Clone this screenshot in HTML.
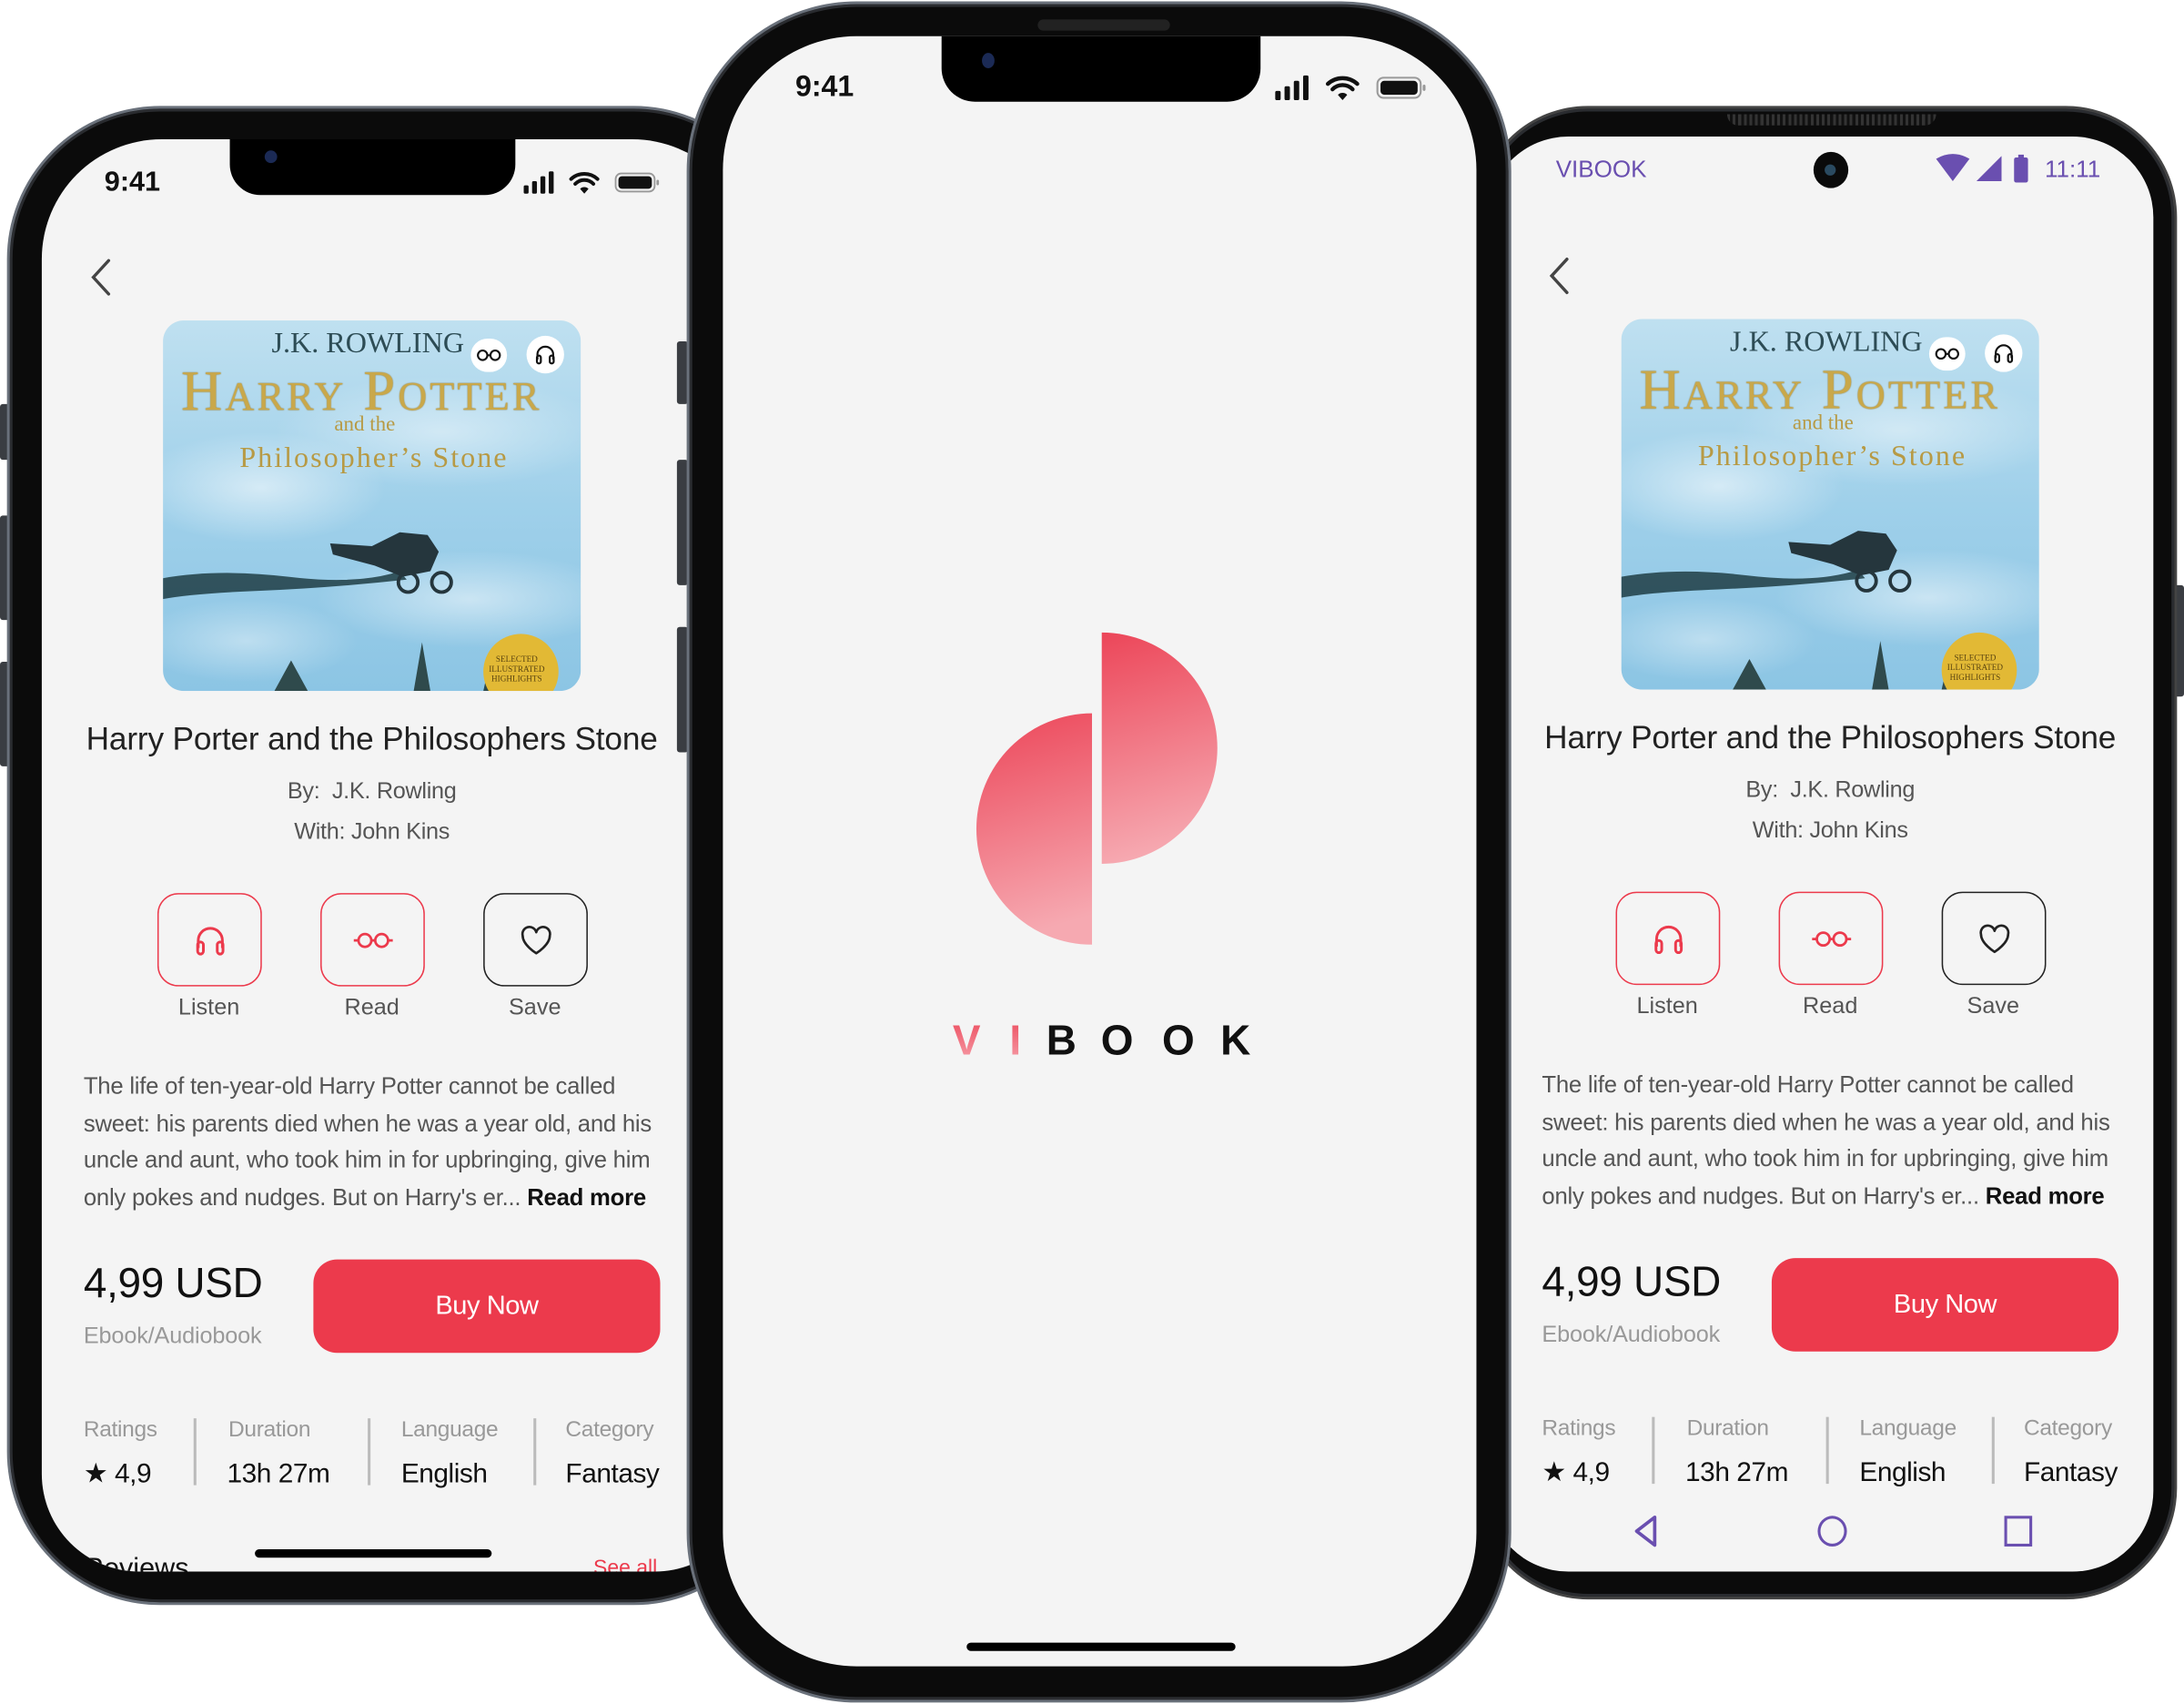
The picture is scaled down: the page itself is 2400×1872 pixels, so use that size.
<!DOCTYPE html>
<html><head><meta charset="utf-8">
<style>
*{margin:0;padding:0;box-sizing:border-box}
html,body{width:2400px;height:1872px;overflow:hidden;background:#fff}
#w{position:absolute;left:0;top:0;width:1568px;height:1223px;overflow:hidden;transform:scale(1.530612);transform-origin:0 0;font-family:"Liberation Sans",sans-serif}
.a{position:absolute}
.frame{position:absolute;background:#0b0b0b;border:2.5px solid #6a717b;box-shadow:inset 0 0 0 2px #2a2c30}
.screen{position:absolute;background:#f4f4f4;overflow:hidden}
.t{position:absolute;white-space:nowrap;line-height:1}
.btn{position:absolute;width:75px;height:67px;border:1.5px solid #ec3a4c;border-radius:15px}
.btn svg{position:absolute;left:50%;top:50%;transform:translate(-50%,-50%)}
.lbl{position:absolute;font-size:16.5px;color:#555;width:100px;text-align:center;line-height:1}
.desc{position:absolute;left:60px;font-size:16.8px;color:#555;letter-spacing:-0.15px;line-height:1;white-space:nowrap}
.sl{position:absolute;font-size:16px;color:#999;line-height:1;letter-spacing:-0.2px}
.sv{position:absolute;font-size:19.5px;color:#111;line-height:1;letter-spacing:-0.3px}
.dv{position:absolute;width:1.5px;height:48px;background:#bbb;top:1018px}
.side{position:absolute;background:#3a3d42;border-radius:2px}
</style></head><body><div id="w">

<!-- LEFT PHONE -->
<div class="side" style="left:0;top:290px;width:7px;height:40px"></div>
<div class="side" style="left:0;top:370px;width:7px;height:75px"></div>
<div class="side" style="left:0;top:475px;width:7px;height:75px"></div>
<div class="frame" style="left:5px;top:76px;width:560px;height:1076px;border-radius:110px"></div>
<div class="screen" style="left:30px;top:100px;width:510px;height:1028px;border-radius:86px 86px 70px 70px">
 <div class="a" style="left:-30px;top:-100px;width:600px;height:1228px" id="L">
  <div class="a" style="left:165px;top:98px;width:205px;height:42px;background:#000;border-radius:0 0 22px 22px"></div>
  <div class="a" style="left:190px;top:108px;width:9px;height:9px;border-radius:50%;background:#1b2a55"></div>
  <div class="t" style="left:75px;top:121px;font-size:20px;font-weight:bold;color:#111">9:41</div>
  <svg class="a" style="left:376px;top:122px" width="98" height="18" viewBox="0 0 98 18">
   <rect x="0" y="11" width="3.5" height="6" rx="1" fill="#111"/><rect x="6" y="8" width="3.5" height="9" rx="1" fill="#111"/><rect x="12" y="4.5" width="3.5" height="12.5" rx="1" fill="#111"/><rect x="18" y="1" width="3.5" height="16" rx="1" fill="#111"/>
   <path d="M34 6.5a14 14 0 0 1 19 0M37 10a9 9 0 0 1 13 0" stroke="#111" stroke-width="2.6" fill="none" stroke-linecap="round"/>
   <path d="M40.5 13.6l3 3.4 3-3.4a4 4 0 0 0-6 0z" fill="#111"/>
   <rect x="66" y="2.5" width="28" height="13" rx="4" fill="none" stroke="#999" stroke-width="1.2"/><rect x="68" y="4.5" width="24" height="9" rx="2.5" fill="#111"/><rect x="95.3" y="7" width="1.8" height="4" rx="1" fill="#999"/>
  </svg>
 </div>
</div>

<!-- RIGHT PHONE -->
<div class="side" style="left:1558px;top:420px;width:10px;height:80px"></div>
<div class="frame" style="left:1060px;top:76px;width:503px;height:1072px;border-radius:80px;border-color:#444"></div>
<div class="a" style="left:1240px;top:82px;width:150px;height:8px;background:repeating-linear-gradient(90deg,#333 0 2px,#111 2px 4px);border-radius:0 0 8px 8px"></div>
<div class="screen" style="left:1068px;top:98px;width:478px;height:1030px;border-radius:58px" id="Rs">
 <div class="a" style="left:-1068px;top:-98px;width:1600px;height:1228px">
  <div class="t" style="left:1117px;top:113px;font-size:17px;color:#6a4fb0">VIBOOK</div>
  <div class="a" style="left:1302px;top:109px;width:25px;height:26px;border-radius:50%;background:#0a0a0a"><div class="a" style="left:8px;top:9px;width:8px;height:8px;border-radius:50%;background:#2a4a60"></div></div>
  <svg class="a" style="left:1390px;top:110px" width="70" height="22" viewBox="0 0 70 22">
   <path d="M0 4Q12 -3 24 4L12 20z" fill="#6a4fb0"/>
   <path d="M29 20L47 2V20z" fill="#6a4fb0"/>
   <rect x="56" y="3" width="10" height="18" rx="1.5" fill="#6a4fb0"/><rect x="59" y="1" width="4" height="3" fill="#6a4fb0"/>
  </svg>
  <div class="t" style="left:1468px;top:113px;font-size:17px;color:#6a4fb0">11:11</div>
  <svg class="a" style="left:1170px;top:1086px" width="24" height="26" viewBox="0 0 24 26"><path d="M18 3L5 13l13 10z" fill="none" stroke="#6a4fb0" stroke-width="2.4" stroke-linejoin="round"/></svg>
  <div class="a" style="left:1305px;top:1088px;width:21px;height:22px;border:2.4px solid #6a4fb0;border-radius:50%"></div>
  <div class="a" style="left:1439px;top:1088px;width:20px;height:22px;border:2.4px solid #6a4fb0"></div>
 </div>
</div>

<!-- CENTER PHONE -->
<div class="side" style="left:486px;top:245px;width:8px;height:45px"></div>
<div class="side" style="left:486px;top:330px;width:8px;height:90px"></div>
<div class="side" style="left:486px;top:450px;width:8px;height:90px"></div>
<div class="frame" style="left:493px;top:1px;width:592px;height:1221px;border-radius:122px"></div>
<div class="a" style="left:745px;top:14px;width:95px;height:8px;border-radius:4px;background:#222"></div>
<div class="screen" style="left:519px;top:26px;width:541px;height:1170px;border-radius:96px">
 <div class="a" style="left:-519px;top:-26px;width:1600px;height:1222px">
  <div class="a" style="left:676px;top:24px;width:229px;height:49px;background:#000;border-radius:0 0 24px 24px"></div>
  <div class="a" style="left:705px;top:38px;width:9px;height:11px;border-radius:50%;background:#1b2a55"></div>
  <div class="t" style="left:571px;top:52px;font-size:21px;font-weight:bold;color:#111">9:41</div>
  <svg class="a" style="left:913px;top:53px" width="114" height="20" viewBox="0 0 98 18">
   <rect x="0" y="11" width="3.5" height="6" rx="1" fill="#111"/><rect x="6" y="8" width="3.5" height="9" rx="1" fill="#111"/><rect x="12" y="4.5" width="3.5" height="12.5" rx="1" fill="#111"/><rect x="18" y="1" width="3.5" height="16" rx="1" fill="#111"/>
   <path d="M34 6.5a14 14 0 0 1 19 0M37 10a9 9 0 0 1 13 0" stroke="#111" stroke-width="2.6" fill="none" stroke-linecap="round"/>
   <path d="M40.5 13.6l3 3.4 3-3.4a4 4 0 0 0-6 0z" fill="#111"/>
   <rect x="66" y="2.5" width="28" height="13" rx="4" fill="none" stroke="#999" stroke-width="1.2"/><rect x="68" y="4.5" width="24" height="9" rx="2.5" fill="#111"/><rect x="95.3" y="7" width="1.8" height="4" rx="1" fill="#999"/>
  </svg>
  <svg class="a" style="left:690px;top:440px" width="200" height="250" viewBox="690 440 200 250">
   <defs><linearGradient id="g1" x1="0" y1="0" x2="0.15" y2="1"><stop offset="0" stop-color="#ec4659"/><stop offset="1" stop-color="#f6a9b1"/></linearGradient></defs>
   <path d="M784 512A83 83 0 0 0 784 678Z" fill="url(#g1)"/>
   <path d="M791 454A83 83 0 0 1 791 620Z" fill="url(#g1)"/>
  </svg>
  <svg class="a" style="left:670px;top:720px" width="250" height="50" viewBox="670 720 250 50">
   <defs><linearGradient id="g2" x1="0" y1="0" x2="0" y2="1"><stop offset="0" stop-color="#ec4a5c"/><stop offset="1" stop-color="#f6a0aa"/></linearGradient></defs>
   <g font-family="Liberation Sans" font-weight="bold" font-size="30" text-anchor="middle">
   <text x="694" y="757" fill="url(#g2)">V</text>
   <text x="729" y="757" fill="url(#g2)">I</text>
   <text x="762" y="757" fill="#111">B</text>
   <text x="802" y="757" fill="#111">O</text>
   <text x="846" y="757" fill="#111">O</text>
   <text x="887" y="757" fill="#111">K</text></g>
  </svg>
  <div class="a" style="left:694px;top:1179px;width:193px;height:6px;border-radius:3px;background:#000"></div>
 </div>
</div>

<template id="tpl">
  <svg class="a" style="left:62px;top:185px" width="20" height="28" viewBox="0 0 20 28"><path d="M16 2L5 14l11 12" fill="none" stroke="#444" stroke-width="2.2" stroke-linecap="round"/></svg>
  <div class="a" style="left:117px;top:230px;width:300px;height:266px;border-radius:15px;overflow:hidden;background:radial-gradient(ellipse 90px 40px at 70px 120px,rgba(255,255,255,.55),transparent),radial-gradient(ellipse 110px 35px at 220px 200px,rgba(255,255,255,.5),transparent),radial-gradient(ellipse 120px 40px at 200px 80px,rgba(255,255,255,.45),transparent),radial-gradient(ellipse 80px 30px at 60px 230px,rgba(255,255,255,.4),transparent),linear-gradient(180deg,#bfe0f0 0%,#9fd0ea 50%,#8cc5e4 100%)">
   <div class="t" style="left:78px;top:6px;font-family:'Liberation Serif',serif;font-size:21px;color:#2d4c55">J.K. ROWLING</div>
   <div class="t" style="left:13px;top:30px;font-family:'Liberation Serif',serif;font-size:41px;color:#c9a84a;letter-spacing:2px;font-variant:small-caps;text-shadow:0 0 1px #8a6d20">Harry Potter</div>
   <div class="t" style="left:123px;top:68px;font-family:'Liberation Serif',serif;font-size:15px;color:#b79a45">and the</div>
   <div class="t" style="left:55px;top:88px;font-family:'Liberation Serif',serif;font-size:21px;color:#b79a45;letter-spacing:1.3px">Philosopher’s Stone</div>
   <div class="a" style="left:221px;top:13px;width:26px;height:24px;border-radius:12px;background:#fff"><svg class="a" style="left:4px;top:7px" width="18" height="10" viewBox="0 0 18 10"><circle cx="4.5" cy="5" r="3.4" fill="none" stroke="#111" stroke-width="1.4"/><circle cx="13.5" cy="5" r="3.4" fill="none" stroke="#111" stroke-width="1.4"/><path d="M8 5h2" stroke="#111" stroke-width="1.4"/></svg></div>
   <div class="a" style="left:261px;top:11px;width:27px;height:27px;border-radius:50%;background:#fff"><svg class="a" style="left:5px;top:5px" width="17" height="17" viewBox="0 0 24 24"><path d="M4 17v-5a8 8 0 0 1 16 0v5" fill="none" stroke="#111" stroke-width="2"/><rect x="3.5" y="13" width="4" height="8" rx="2" fill="none" stroke="#111" stroke-width="2"/><rect x="16.5" y="13" width="4" height="8" rx="2" fill="none" stroke="#111" stroke-width="2"/></svg></div>
   <svg class="a" style="left:0;top:140px" width="300" height="126" viewBox="0 0 300 126">
    <path d="M0 45Q40 38 90 44T170 40L175 46Q120 52 70 54T0 60z" fill="#1f3d44" opacity=".85"/>
    <path d="M120 20l30 2 20-10 20 2 8 12-6 14-20 4-20-8-30-8z" fill="#25363d"/>
    <circle cx="176" cy="48" r="7" fill="none" stroke="#25363d" stroke-width="2.5"/><circle cx="200" cy="48" r="7" fill="none" stroke="#25363d" stroke-width="2.5"/>
    <path d="M80 126l12-22 12 22zM180 126l6-35 6 35zM230 126l4-18 4 18z" fill="#2f4a4c"/>
    <circle cx="257" cy="112" r="27" fill="#e2b935"/>
   </svg>
   <div class="t" style="left:234px;top:241px;font-family:'Liberation Serif',serif;font-size:6px;color:#5a4410;text-align:center;line-height:1.2">SELECTED<br>ILLUSTRATED<br>HIGHLIGHTS</div>
  </div>
  <div class="t" style="left:0;width:534px;text-align:center;top:519px;font-size:23px;color:#222;letter-spacing:-0.1px">Harry Porter and the Philosophers Stone</div>
  <div class="t" style="left:0;width:534px;text-align:center;top:560px;font-size:16.5px;color:#555;letter-spacing:-0.2px">By:&nbsp; J.K. Rowling</div>
  <div class="t" style="left:0;width:534px;text-align:center;top:589px;font-size:16.5px;color:#555;letter-spacing:-0.2px">With: John Kins</div>
  <div class="btn" style="left:113px;top:641px"><svg width="26" height="26" viewBox="0 0 24 24"><path d="M4 17v-5a8 8 0 0 1 16 0v5" fill="none" stroke="#ec3a4c" stroke-width="1.8"/><rect x="3.6" y="13" width="3.8" height="8" rx="1.9" fill="none" stroke="#ec3a4c" stroke-width="1.8"/><rect x="16.6" y="13" width="3.8" height="8" rx="1.9" fill="none" stroke="#ec3a4c" stroke-width="1.8"/></svg></div>
  <div class="btn" style="left:230px;top:641px"><svg width="30" height="14" viewBox="0 0 30 14"><circle cx="9" cy="7" r="4.6" fill="none" stroke="#ec3a4c" stroke-width="1.8"/><circle cx="21" cy="7" r="4.6" fill="none" stroke="#ec3a4c" stroke-width="1.8"/><path d="M13.6 7h2.8M1 7h3.4M25.6 7H29" stroke="#ec3a4c" stroke-width="1.8"/></svg></div>
  <div class="btn" style="left:347px;top:641px;border-color:#222"><svg width="28" height="26" viewBox="0 0 24 24"><path d="M12 20.5S3 15 3 8.8A4.6 4.6 0 0 1 12 6.6a4.6 4.6 0 0 1 9 2.2C21 15 12 20.5 12 20.5z" fill="none" stroke="#222" stroke-width="1.6" stroke-linejoin="round"/></svg></div>
  <div class="lbl" style="left:100px;top:715px">Listen</div>
  <div class="lbl" style="left:217px;top:715px">Read</div>
  <div class="lbl" style="left:334px;top:715px">Save</div>
  <div class="desc" style="top:772px">The life of ten-year-old Harry Potter cannot be called</div>
  <div class="desc" style="top:799px">sweet: his parents died when he was a year old, and his</div>
  <div class="desc" style="top:825px">uncle and aunt, who took him in for upbringing, give him</div>
  <div class="desc" style="top:852px">only pokes and nudges. But on Harry's er... <b style="color:#111;font-weight:bold">Read more</b></div>
  <div class="t" style="left:60px;top:907px;font-size:30px;color:#111;letter-spacing:-0.2px">4,99 USD</div>
  <div class="t" style="left:60px;top:951px;font-size:16.5px;color:#999;letter-spacing:-0.1px">Ebook/Audiobook</div>
  <div class="a" style="left:225px;top:904px;width:249px;height:67px;border-radius:17px;background:#ec3a4c"></div>
  <div class="t" style="left:225px;width:249px;text-align:center;top:928px;font-size:19px;color:#fff;letter-spacing:-0.3px">Buy Now</div>
  <div class="sl" style="left:60px;top:1019px">Ratings</div>
  <div class="sl" style="left:164px;top:1019px">Duration</div>
  <div class="sl" style="left:288px;top:1019px">Language</div>
  <div class="sl" style="left:406px;top:1019px">Category</div>
  <div class="sv" style="left:60px;top:1049px">★ 4,9</div>
  <div class="sv" style="left:163px;top:1049px">13h 27m</div>
  <div class="sv" style="left:288px;top:1049px">English</div>
  <div class="sv" style="left:406px;top:1049px">Fantasy</div>
  <div class="dv" style="left:139px"></div>
  <div class="dv" style="left:264px"></div>
  <div class="dv" style="left:383px"></div>
</template>
<script>
var t=document.getElementById('tpl').innerHTML;
var L=document.getElementById('L');
L.insertAdjacentHTML('beforeend',t+'<div class="t" style="left:60px;top:1116px;font-size:20px;color:#111">Reviews</div><div class="t" style="left:426px;top:1118px;font-size:15px;color:#ec3a4c">See all</div><div class="a" style="left:183px;top:1112px;width:170px;height:6px;border-radius:3px;background:#000"></div>');
var R=document.querySelector('#Rs > div');
R.insertAdjacentHTML('beforeend','<div class="a" style="left:1047px;top:-1px;width:600px;height:1228px">'+t+'</div>');
</script>
</div></body></html>
